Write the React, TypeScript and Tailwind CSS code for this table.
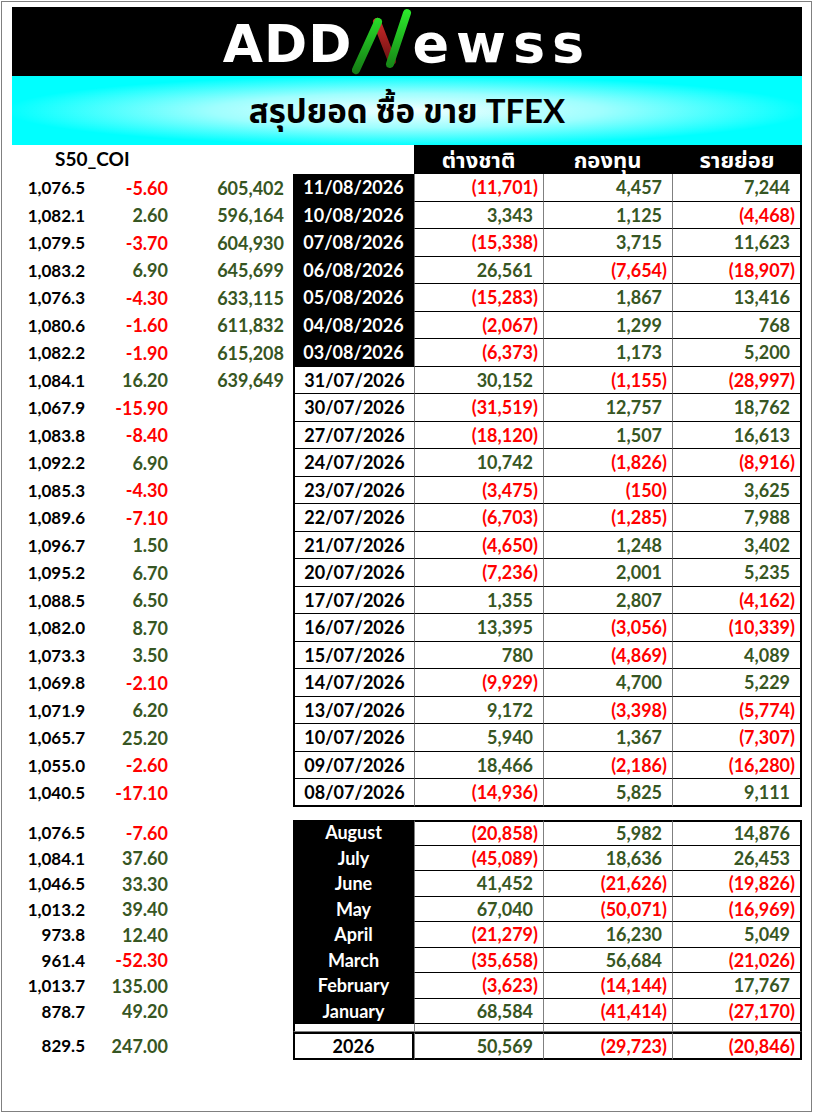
import React from "react"

type Daily = [string, string, string, string, string, string, string]
type Monthly = [string, string, string, string, string, string]

const daily: Daily[] = [
  ["1,076.5", "-5.60", "605,402", "11/08/2026", "(11,701)", "4,457", "7,244"],
  ["1,082.1", "2.60", "596,164", "10/08/2026", "3,343", "1,125", "(4,468)"],
  ["1,079.5", "-3.70", "604,930", "07/08/2026", "(15,338)", "3,715", "11,623"],
  ["1,083.2", "6.90", "645,699", "06/08/2026", "26,561", "(7,654)", "(18,907)"],
  ["1,076.3", "-4.30", "633,115", "05/08/2026", "(15,283)", "1,867", "13,416"],
  ["1,080.6", "-1.60", "611,832", "04/08/2026", "(2,067)", "1,299", "768"],
  ["1,082.2", "-1.90", "615,208", "03/08/2026", "(6,373)", "1,173", "5,200"],
  ["1,084.1", "16.20", "639,649", "31/07/2026", "30,152", "(1,155)", "(28,997)"],
  ["1,067.9", "-15.90", "", "30/07/2026", "(31,519)", "12,757", "18,762"],
  ["1,083.8", "-8.40", "", "27/07/2026", "(18,120)", "1,507", "16,613"],
  ["1,092.2", "6.90", "", "24/07/2026", "10,742", "(1,826)", "(8,916)"],
  ["1,085.3", "-4.30", "", "23/07/2026", "(3,475)", "(150)", "3,625"],
  ["1,089.6", "-7.10", "", "22/07/2026", "(6,703)", "(1,285)", "7,988"],
  ["1,096.7", "1.50", "", "21/07/2026", "(4,650)", "1,248", "3,402"],
  ["1,095.2", "6.70", "", "20/07/2026", "(7,236)", "2,001", "5,235"],
  ["1,088.5", "6.50", "", "17/07/2026", "1,355", "2,807", "(4,162)"],
  ["1,082.0", "8.70", "", "16/07/2026", "13,395", "(3,056)", "(10,339)"],
  ["1,073.3", "3.50", "", "15/07/2026", "780", "(4,869)", "4,089"],
  ["1,069.8", "-2.10", "", "14/07/2026", "(9,929)", "4,700", "5,229"],
  ["1,071.9", "6.20", "", "13/07/2026", "9,172", "(3,398)", "(5,774)"],
  ["1,065.7", "25.20", "", "10/07/2026", "5,940", "1,367", "(7,307)"],
  ["1,055.0", "-2.60", "", "09/07/2026", "18,466", "(2,186)", "(16,280)"],
  ["1,040.5", "-17.10", "", "08/07/2026", "(14,936)", "5,825", "9,111"],
]

const monthly: Monthly[] = [
  ["1,076.5", "-7.60", "August", "(20,858)", "5,982", "14,876"],
  ["1,084.1", "37.60", "July", "(45,089)", "18,636", "26,453"],
  ["1,046.5", "33.30", "June", "41,452", "(21,626)", "(19,826)"],
  ["1,013.2", "39.40", "May", "67,040", "(50,071)", "(16,969)"],
  ["973.8", "12.40", "April", "(21,279)", "16,230", "5,049"],
  ["961.4", "-52.30", "March", "(35,658)", "56,684", "(21,026)"],
  ["1,013.7", "135.00", "February", "(3,623)", "(14,144)", "17,767"],
  ["878.7", "49.20", "January", "68,584", "(41,414)", "(27,170)"],
]

const GREEN = "text-[#375623]"
const RED = "text-[#ff0000]"

function Price({ v }: { v: string }) {
  return <div className="w-[78px] pr-[5px] flex items-center justify-end text-[17px] text-black">{v}</div>
}

function Change({ v }: { v: string }) {
  return (
    <div className={`w-[82px] pr-[4px] flex items-center justify-end text-[18px] ${v.startsWith("-") ? RED : GREEN}`}>
      {v}
    </div>
  )
}

// accounting style: a blank ")" keeps positive numbers lined up with negatives
function Num({ v, className = "" }: { v: string; className?: string }) {
  const neg = v.startsWith("(")
  return (
    <div
      className={`w-[129px] pr-[5px] flex items-center justify-end text-[18px] border-l border-l-[#808080] ${neg ? RED : GREEN} ${className}`}
    >
      {v}
      {!neg && <span className="invisible">)</span>}
    </div>
  )
}

function Logo() {
  return (
    <div className="h-[69px] bg-black flex justify-center">
      <span className="mt-[5px] self-center font-['DejaVu_Sans',sans-serif] font-bold text-[52px] leading-none text-white tracking-[1px]">
        ADD
      </span>
      <svg width="60" height="69" viewBox="0 0 60 69" className="shrink-0">
        <defs>
          <linearGradient id="gN" x1="0" y1="0" x2="0" y2="69" gradientUnits="userSpaceOnUse">
            <stop offset="0" stopColor="#2cf02c" />
            <stop offset="1" stopColor="#137513" />
          </linearGradient>
          <linearGradient id="rN" x1="0" y1="10" x2="0" y2="60" gradientUnits="userSpaceOnUse">
            <stop offset="0" stopColor="#d42a2a" />
            <stop offset="1" stopColor="#5e1010" />
          </linearGradient>
        </defs>
        <line x1="25" y1="15" x2="40" y2="54" stroke="url(#rN)" strokeWidth="8" strokeLinecap="round" />
        <line x1="4" y1="63" x2="26" y2="15" stroke="url(#gN)" strokeWidth="8" strokeLinecap="round" />
        <line x1="38" y1="57" x2="55" y2="6" stroke="url(#gN)" strokeWidth="8" strokeLinecap="round" />
      </svg>
      <span className="mt-[5px] self-center font-['DejaVu_Sans',sans-serif] font-bold text-[54px] leading-none text-white tracking-[7px]">
        ewss
      </span>
    </div>
  )
}

export default function App() {
  return (
    <div className="w-[815px] h-[1114px] bg-white pt-px pl-px font-['Lato','Noto_Sans_Thai','Noto_Sans',sans-serif] font-bold">
      <div className="w-[811px] h-[1111px] border border-[#808080] pl-[10px] pt-[5px]">
        <div className="w-[790px]">
          <Logo />

          {/* Title band */}
          <div className="h-[69px] flex items-center justify-center bg-[radial-gradient(ellipse_at_center,#f2ffff_0%,#9ffefe_35%,#00ffff_72%)]">
            <span className="text-[33px] text-black leading-none">สรุปยอด ซื้อ ขาย TFEX</span>
          </div>

          {/* Column headings */}
          <div className="h-[29px] flex">
            <div className="w-[402px] pl-[43px] flex items-center text-[19px] text-black">S50_COI</div>
            <div className="w-[129px] bg-black text-white text-[22px] flex items-center justify-center">ต่างชาติ</div>
            <div className="w-[129px] bg-black text-white text-[22px] flex items-center justify-center">กองทุน</div>
            <div className="w-[130px] bg-black text-white text-[22px] flex items-center justify-center">รายย่อย</div>
          </div>

          {/* Daily rows */}
          {daily.map((r, i) => {
            const last = i === daily.length - 1
            const bottom = last ? "border-b-2 border-b-black" : "border-b border-b-black"
            return (
              <div key={r[3]} className={`flex ${i % 2 === 0 ? "h-[28px]" : "h-[27px]"}`}>
                <Price v={r[0]} />
                <Change v={r[1]} />
                <div className={`w-[121px] pr-[9px] flex items-center justify-end text-[18px] ${GREEN}`}>{r[2]}</div>
                {i < 7 ? (
                  <div className="w-[121px] bg-black border-b border-b-black text-white text-[18px] flex items-center justify-center">
                    {r[3]}
                  </div>
                ) : (
                  <div className={`w-[121px] border-l-2 border-l-black ${bottom} text-black text-[18px] flex items-center justify-center`}>
                    {r[3]}
                  </div>
                )}
                <Num v={r[4]} className={bottom} />
                <Num v={r[5]} className={bottom} />
                <Num v={r[6]} className={`${bottom} w-[130px] border-r-2 border-r-black`} />
              </div>
            )
          })}

          {/* Monthly summary */}
          <div className="mt-[13px]">
            {monthly.map((r, i) => {
              const edge = i === 0 ? "border-t-2 border-t-black border-b border-b-black" : "border-b border-b-black"
              return (
                <div key={r[2]} className={`flex ${i % 2 === 0 ? "h-[26px]" : "h-[25px]"}`}>
                  <Price v={r[0]} />
                  <Change v={r[1]} />
                  <div className="w-[121px]" />
                  <div className="w-[121px] bg-black border-b border-b-black text-white text-[18px] flex items-center justify-center">
                    {r[2]}
                  </div>
                  <Num v={r[3]} className={edge} />
                  <Num v={r[4]} className={edge} />
                  <Num v={r[5]} className={`${edge} w-[130px] border-r-2 border-r-black`} />
                </div>
              )
            })}

            <div className="h-[8px] flex">
              <div className="w-[281px]" />
              <div className="w-[121px] border-l-2 border-l-black border-b border-b-[#808080]" />
              <div className="w-[129px] border-l border-l-[#808080] border-b border-b-[#808080]" />
              <div className="w-[129px] border-l border-l-[#808080] border-b border-b-[#808080]" />
              <div className="w-[130px] border-l border-l-[#808080] border-b border-b-[#808080] border-r-2 border-r-black" />
            </div>

            <div className="h-[28px] flex">
              <Price v="829.5" />
              <Change v="247.00" />
              <div className="w-[121px]" />
              <div className="w-[121px] border-2 border-black text-black text-[18px] flex items-center justify-center">2026</div>
              <Num v="50,569" className="border-y-2 border-y-black" />
              <Num v="(29,723)" className="border-y-2 border-y-black" />
              <Num v="(20,846)" className="border-y-2 border-y-black w-[130px] border-r-2 border-r-black" />
            </div>
          </div>
        </div>
      </div>
    </div>
  )
}
